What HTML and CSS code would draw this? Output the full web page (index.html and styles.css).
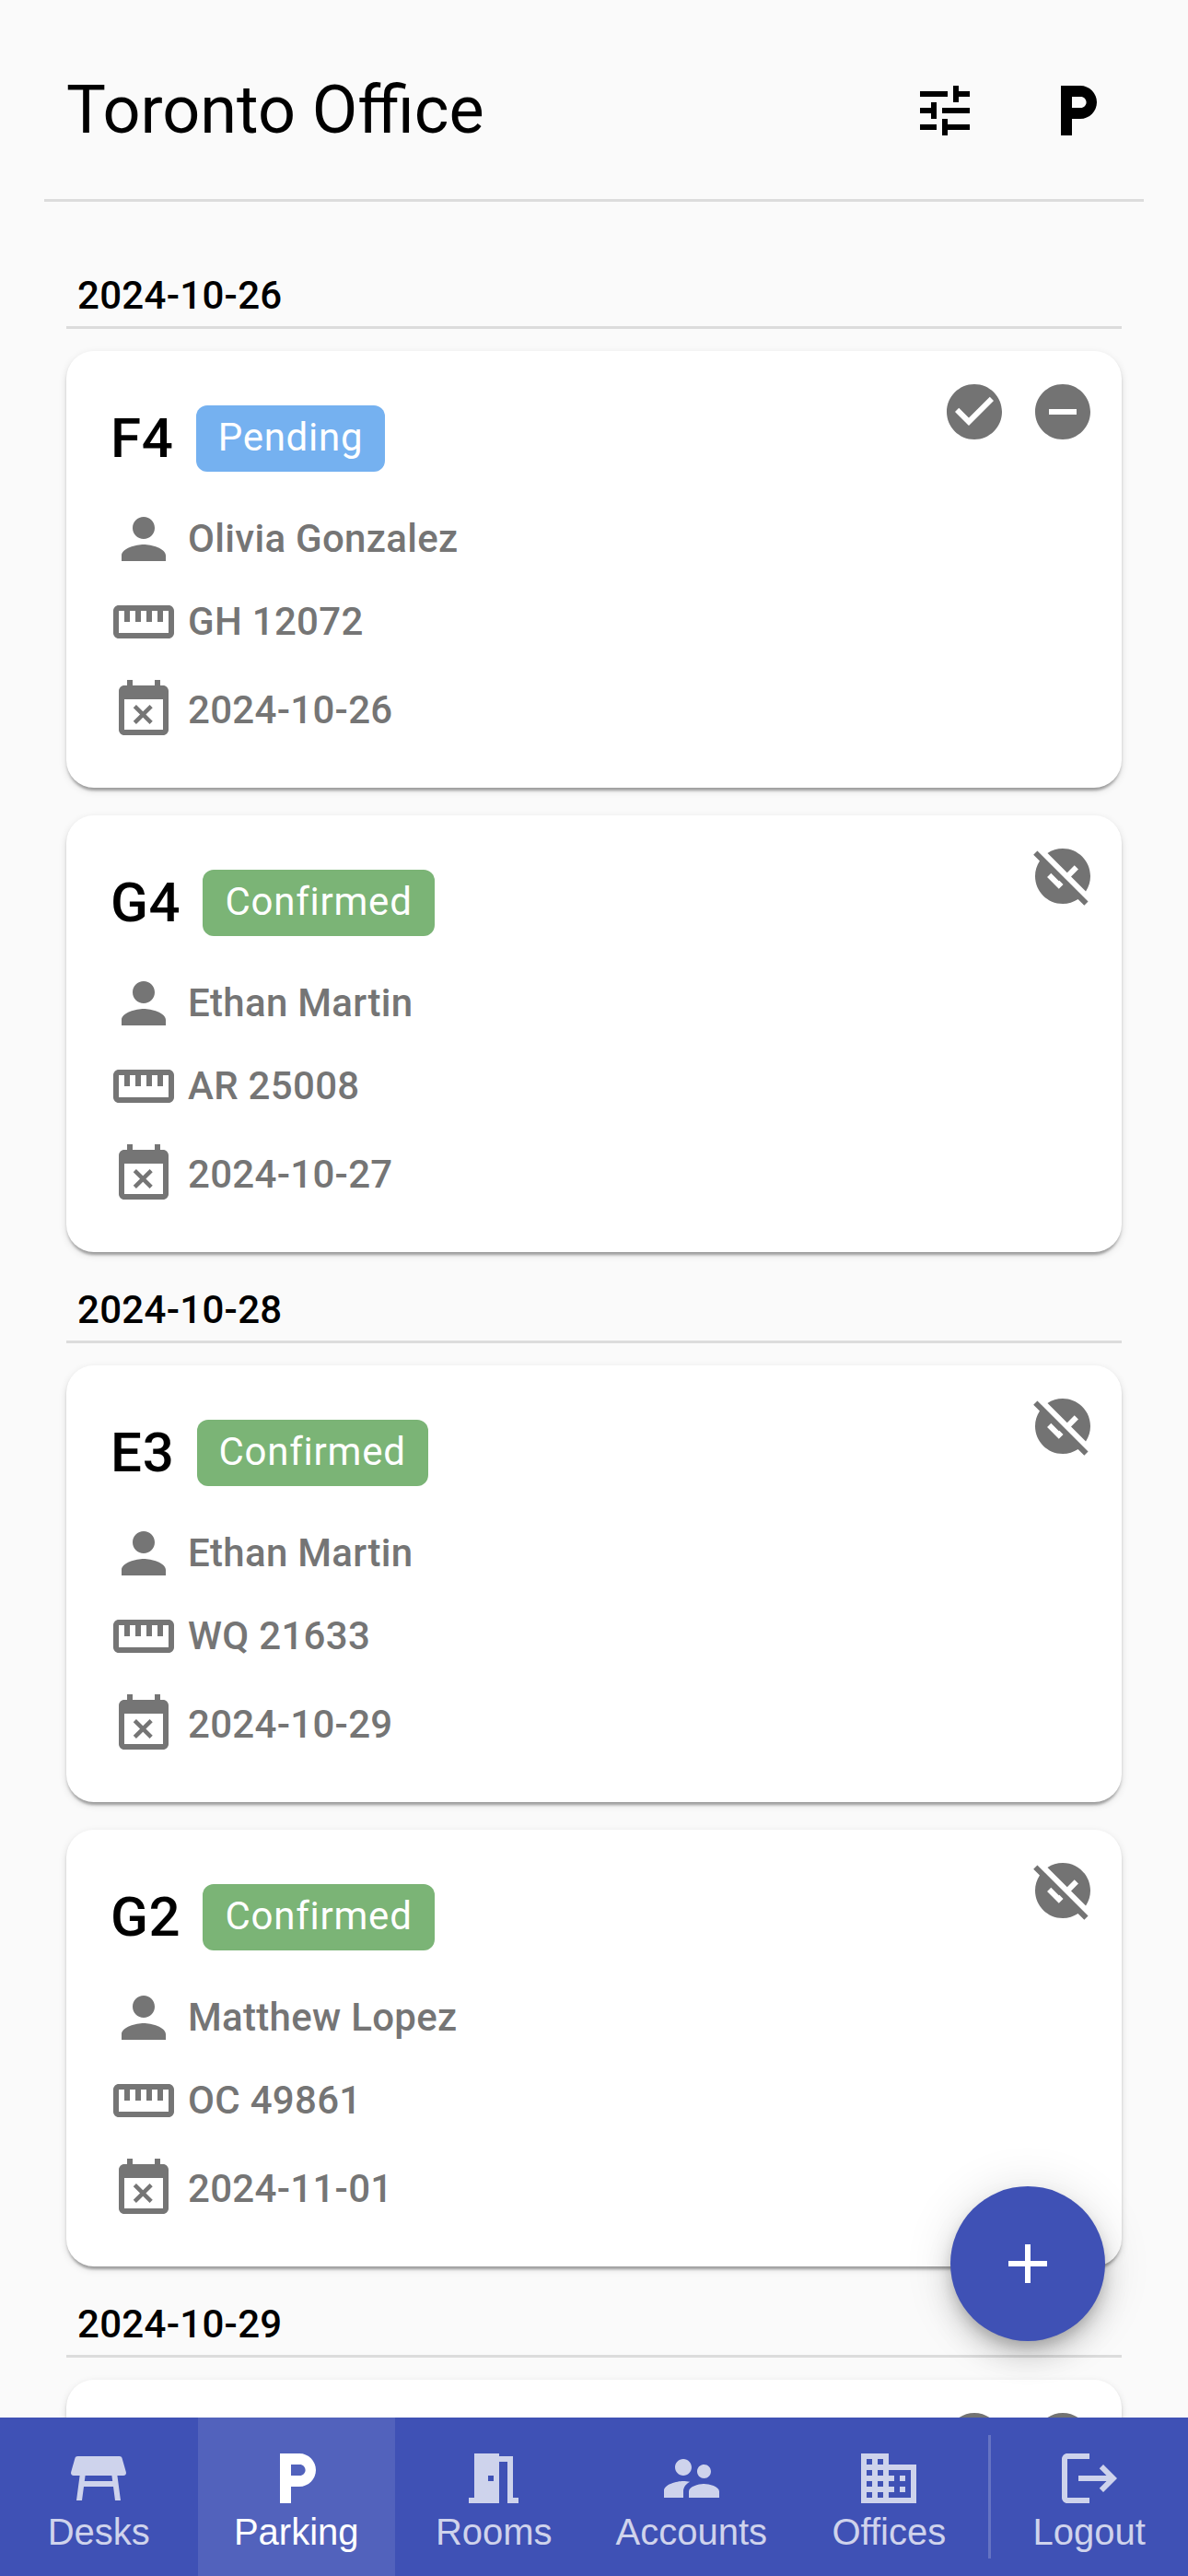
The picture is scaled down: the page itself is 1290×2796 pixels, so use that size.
FILE: index.html
```html
<!DOCTYPE html>
<html lang="en">
<head>
<meta charset="utf-8">
<title>Toronto Office – Parking</title>
<link rel="stylesheet" href="styles.css">
</head>
<body>
<svg class="sprite" aria-hidden="true">
  <symbol id="tune" viewBox="0 0 24 24"><path d="M3 17v2h6v-2H3zM3 5v2h10V5H3zm10 16v-2h8v-2h-8v-2h-2v6h2zM7 9v2H3v2h4v2h2V9H7zm14 4v-2H11v2h10zm-6-4h2V7h4V5h-4V3h-2v6z"/></symbol>
  <symbol id="parking" viewBox="0 0 24 24"><path d="M13 3H6v18h4v-6h3c3.31 0 6-2.69 6-6s-2.69-6-6-6zm.2 8H10V7h3.2c1.1 0 2 .9 2 2s-.9 2-2 2z"/></symbol>
  <symbol id="person" viewBox="0 0 24 24"><path d="M12 12c2.21 0 4-1.79 4-4s-1.79-4-4-4-4 1.79-4 4 1.79 4 4 4zm0 2c-2.67 0-8 1.34-8 4v2h16v-2c0-2.66-5.33-4-8-4z"/></symbol>
  <symbol id="plate" viewBox="0 0 24 24"><path d="M21 6H3c-1.1 0-2 .9-2 2v8c0 1.1.9 2 2 2h18c1.1 0 2-.9 2-2V8c0-1.1-.9-2-2-2zm0 10H3V8h2v4h2V8h2v4h2V8h2v4h2V8h2v4h2V8h2v8z"/></symbol>
  <symbol id="until" viewBox="0 0 24 24"><path d="M9.31 17l2.44-2.44L14.19 17l1.06-1.06-2.44-2.44 2.44-2.44L14.19 10l-2.44 2.44L9.31 10l-1.06 1.06 2.44 2.44-2.44 2.44L9.31 17zM19 3h-1V1h-2v2H8V1H6v2H5c-1.11 0-1.99.9-1.99 2L3 19c0 1.1.89 2 2 2h14c1.1 0 2-.9 2-2V5c0-1.1-.9-2-2-2zm0 16H5V8h14v11z"/></symbol>
  <symbol id="check" viewBox="0 0 24 24"><path d="M12 2C6.48 2 2 6.48 2 12s4.48 10 10 10 10-4.48 10-10S17.52 2 12 2zm-2 15l-5-5 1.41-1.41L10 14.17l7.59-7.59L19 8l-9 9z"/></symbol>
  <symbol id="minus" viewBox="0 0 24 24"><path d="M12 2C6.48 2 2 6.48 2 12s4.48 10 10 10 10-4.48 10-10S17.52 2 12 2zm5 11H7v-2h10v2z"/></symbol>
  <symbol id="unpublish" viewBox="0 0 24 24"><path d="M21.19 21.19L2.81 2.81 1.39 4.22l2.27 2.27C2.61 8.07 2 9.96 2 12c0 5.52 4.48 10 10 10 2.04 0 3.93-.61 5.51-1.66l2.27 2.27 1.41-1.42zm-10.6-4.59l-4.24-4.24 1.41-1.41 2.83 2.83.18-.18 1.41 1.41-1.59 1.59zm3-5.84l-7.1-7.1C8.07 2.61 9.96 2 12 2c5.52 0 10 4.48 10 10 0 2.04-.61 3.93-1.66 5.51l-5.34-5.34 2.65-2.65-1.41-1.41-2.65 2.65z"/></symbol>
  <symbol id="add" viewBox="0 0 24 24"><path d="M19 13h-6v6h-2v-6H5v-2h6V5h2v6h6v2z"/></symbol>
  <symbol id="desk" viewBox="0 0 24 24"><path d="M21.96 9.73l-1.43-5C20.41 4.3 20.02 4 19.57 4H4.43c-.45 0-.84.3-.96.73l-1.43 5C1.86 10.37 2.34 11 3 11h2.2L4 20h2l.67-5h10.67l.66 5h2l-1.2-9H21c.66 0 1.14-.63.96-1.27zM6.93 13l.27-2h9.6l.27 2H6.93z"/></symbol>
  <symbol id="room" viewBox="0 0 24 24"><path d="M14 6v15H3v-2h2V3h9v1h5v15h2v2h-4V6h-3zm-4 5v2h2v-2h-2z"/></symbol>
  <symbol id="accounts" viewBox="0 0 24 24"><path d="M16.5 12c1.38 0 2.49-1.12 2.49-2.5S17.88 7 16.5 7C15.12 7 14 8.12 14 9.5s1.12 2.5 2.5 2.5zM9 11c1.66 0 2.99-1.34 2.99-3S10.66 5 9 5C7.34 5 6 6.34 6 8s1.34 3 3 3zm7.5 3c-1.83 0-5.5.92-5.5 2.75V19h11v-2.25c0-1.83-3.67-2.75-5.5-2.75zM9 13c-2.33 0-7 1.17-7 3.5V19h7v-2.25c0-.85.33-2.34 2.37-3.47C10.5 13.1 9.66 13 9 13z"/></symbol>
  <symbol id="offices" viewBox="0 0 24 24"><path d="M12 7V3H2v18h20V7H12zM6 19H4v-2h2v2zm0-4H4v-2h2v2zm0-4H4V9h2v2zm0-4H4V5h2v2zm4 12H8v-2h2v2zm0-4H8v-2h2v2zm0-4H8V9h2v2zm0-4H8V5h2v2zm10 12h-8v-2h2v-2h-2v-2h2v-2h-2V9h8v10zm-2-8h-2v2h2v-2zm0 4h-2v2h2v-2z"/></symbol>
  <symbol id="logout" viewBox="0 0 24 24"><path d="M17 7l-1.41 1.41L18.17 11H8v2h10.17l-2.58 2.58L17 17l5-5-5-5zM4 5h8V3H4c-1.1 0-2 .9-2 2v14c0 1.1.9 2 2 2h8v-2H4V5z"/></symbol>
</svg>
<div class="app">
  <main class="page">
    <header class="header">
      <h1 class="title">Toronto Office</h1>
      <div class="header-actions">
        <svg class="icon"><use href="#tune"/></svg>
        <svg class="icon"><use href="#parking"/></svg>
      </div>
    </header>

    <div class="list">
      <section class="group">
        <h2 class="day">2024-10-26</h2>
        <article class="card">
          <div class="card-info">
            <div class="card-head"><h3 class="spot">F4</h3><span class="badge pending">Pending</span></div>
            <div class="row"><svg class="icon"><use href="#person"/></svg><span>Olivia Gonzalez</span></div>
            <div class="row"><svg class="icon"><use href="#plate"/></svg><span>GH 12072</span></div>
            <div class="row until"><svg class="icon"><use href="#until"/></svg><span>2024-10-26</span></div>
          </div>
          <div class="card-actions"><svg class="icon"><use href="#check"/></svg><svg class="icon"><use href="#minus"/></svg></div>
        </article>
        <article class="card">
          <div class="card-info">
            <div class="card-head"><h3 class="spot">G4</h3><span class="badge confirmed">Confirmed</span></div>
            <div class="row"><svg class="icon"><use href="#person"/></svg><span>Ethan Martin</span></div>
            <div class="row"><svg class="icon"><use href="#plate"/></svg><span>AR 25008</span></div>
            <div class="row until"><svg class="icon"><use href="#until"/></svg><span>2024-10-27</span></div>
          </div>
          <div class="card-actions"><svg class="icon"><use href="#unpublish"/></svg></div>
        </article>
      </section>

      <section class="group">
        <h2 class="day">2024-10-28</h2>
        <article class="card">
          <div class="card-info">
            <div class="card-head"><h3 class="spot">E3</h3><span class="badge confirmed">Confirmed</span></div>
            <div class="row"><svg class="icon"><use href="#person"/></svg><span>Ethan Martin</span></div>
            <div class="row"><svg class="icon"><use href="#plate"/></svg><span>WQ 21633</span></div>
            <div class="row until"><svg class="icon"><use href="#until"/></svg><span>2024-10-29</span></div>
          </div>
          <div class="card-actions"><svg class="icon"><use href="#unpublish"/></svg></div>
        </article>
        <article class="card">
          <div class="card-info">
            <div class="card-head"><h3 class="spot">G2</h3><span class="badge confirmed">Confirmed</span></div>
            <div class="row"><svg class="icon"><use href="#person"/></svg><span>Matthew Lopez</span></div>
            <div class="row"><svg class="icon"><use href="#plate"/></svg><span>OC 49861</span></div>
            <div class="row until"><svg class="icon"><use href="#until"/></svg><span>2024-11-01</span></div>
          </div>
          <div class="card-actions"><svg class="icon"><use href="#unpublish"/></svg></div>
        </article>
      </section>

      <section class="group">
        <h2 class="day">2024-10-29</h2>
        <article class="card">
          <div class="card-info"></div>
          <div class="card-actions"><svg class="icon"><use href="#check"/></svg><svg class="icon"><use href="#minus"/></svg></div>
        </article>
      </section>
    </div>

    <button class="fab" aria-label="Add"><svg class="icon"><use href="#add"/></svg></button>
  </main>

  <nav class="nav">
    <button class="tab"><svg class="icon"><use href="#desk"/></svg>Desks</button>
    <button class="tab active"><svg class="icon"><use href="#parking"/></svg>Parking</button>
    <button class="tab"><svg class="icon"><use href="#room"/></svg>Rooms</button>
    <button class="tab"><svg class="icon"><use href="#accounts"/></svg>Accounts</button>
    <button class="tab"><svg class="icon"><use href="#offices"/></svg>Offices</button>
    <div class="divider"></div>
    <button class="tab"><svg class="icon"><use href="#logout"/></svg>Logout</button>
  </nav>
</div>
</body>
</html>
```
FILE: styles.css
```css
* {
  box-sizing: border-box;
}

body {
  margin: 0;
  background: #fafafa;
  color: #000;
  font-family: Roboto, "Liberation Sans", sans-serif;
}

h1,
h2,
h3 {
  margin: 0;
}

button {
  border: 0;
  padding: 0;
}

.sprite {
  display: none;
}

.icon {
  width: 72px;
  height: 72px;
  flex: none;
  fill: currentColor;
}

.app {
  display: flex;
  flex-direction: column;
  height: 2796px;
  overflow: hidden;
}

.page {
  position: relative;
  flex: 1;
  min-height: 0;
  overflow: hidden;
}

.header {
  display: flex;
  align-items: center;
  justify-content: space-between;
  height: 219px;
  margin: 0 48px;
  padding: 24px 36px 0 24px;
  border-bottom: 3px solid #dcdcdc;
}

.title {
  font-size: 72px;
  font-weight: 400;
  line-height: 96px;
}

.header-actions {
  display: flex;
  gap: 72px;
}

.list {
  padding: 39px 72px 0;
}

.group {
  display: flex;
  flex-direction: column;
  gap: 30px;
}

.day {
  display: flex;
  align-items: flex-end;
  height: 99px;
  margin-bottom: -6px;
  padding: 0 12px 9px;
  border-bottom: 3px solid #dcdcdc;
  font-size: 42px;
  font-weight: 500;
  letter-spacing: 0.0071em;
  line-height: 48px;
}

.card {
  display: flex;
  justify-content: space-between;
  height: 474px;
  padding: 30px 28.5px 48px 48px;
  border-radius: 30px;
  background: #fff;
  box-shadow:
    0 6px 3px -3px rgba(0, 0, 0, 0.2),
    0 3px 3px 0 rgba(0, 0, 0, 0.14),
    0 3px 9px 0 rgba(0, 0, 0, 0.12);
}

.card-info {
  display: flex;
  flex-direction: column;
  gap: 18px;
  padding-top: 28px;
}

.card-head {
  display: flex;
  align-items: center;
  gap: 24px;
  height: 73px;
  margin-bottom: 19px;
}

.spot {
  font-size: 60px;
  font-weight: 500;
  letter-spacing: 0.0125em;
  line-height: 72px;
}

.badge {
  padding: 0 24px 2px;
  border-radius: 12px;
  color: #fff;
  font-size: 42px;
  letter-spacing: 0.0179em;
  line-height: 70px;
}

.pending {
  background: #75b1f0;
}

.confirmed {
  background: #7bb476;
}

.row {
  display: flex;
  align-items: center;
  gap: 12px;
  color: #757575;
  font-size: 42px;
  font-weight: 500;
  letter-spacing: 0.0071em;
  line-height: 72px;
}

.until {
  margin-top: 6px;
}

.card-actions {
  display: flex;
  gap: 24px;
  color: #737373;
}

.fab {
  position: absolute;
  right: 90px;
  top: 2373px;
  display: flex;
  align-items: center;
  justify-content: center;
  width: 168px;
  height: 168px;
  border-radius: 50%;
  background: #3f51b5;
  color: #fff;
  box-shadow:
    0 9px 15px -3px rgba(0, 0, 0, 0.2),
    0 18px 30px 0 rgba(0, 0, 0, 0.14),
    0 3px 54px 0 rgba(0, 0, 0, 0.12);
}

.nav {
  display: flex;
  height: 172.5px;
  flex: none;
  background: #3f51b5;
}

.tab {
  display: flex;
  flex: 1;
  flex-direction: column;
  align-items: center;
  min-width: 0;
  padding-top: 30.5px;
  background: transparent;
  color: rgba(255, 255, 255, 0.75);
  font: 40px/44px "Liberation Sans", Arial, sans-serif;
}

.active {
  background: rgba(255, 255, 255, 0.1);
  color: #fff;
}

.divider {
  width: 3px;
  margin: 19.5px 0;
  background: rgba(255, 255, 255, 0.2);
}
```
